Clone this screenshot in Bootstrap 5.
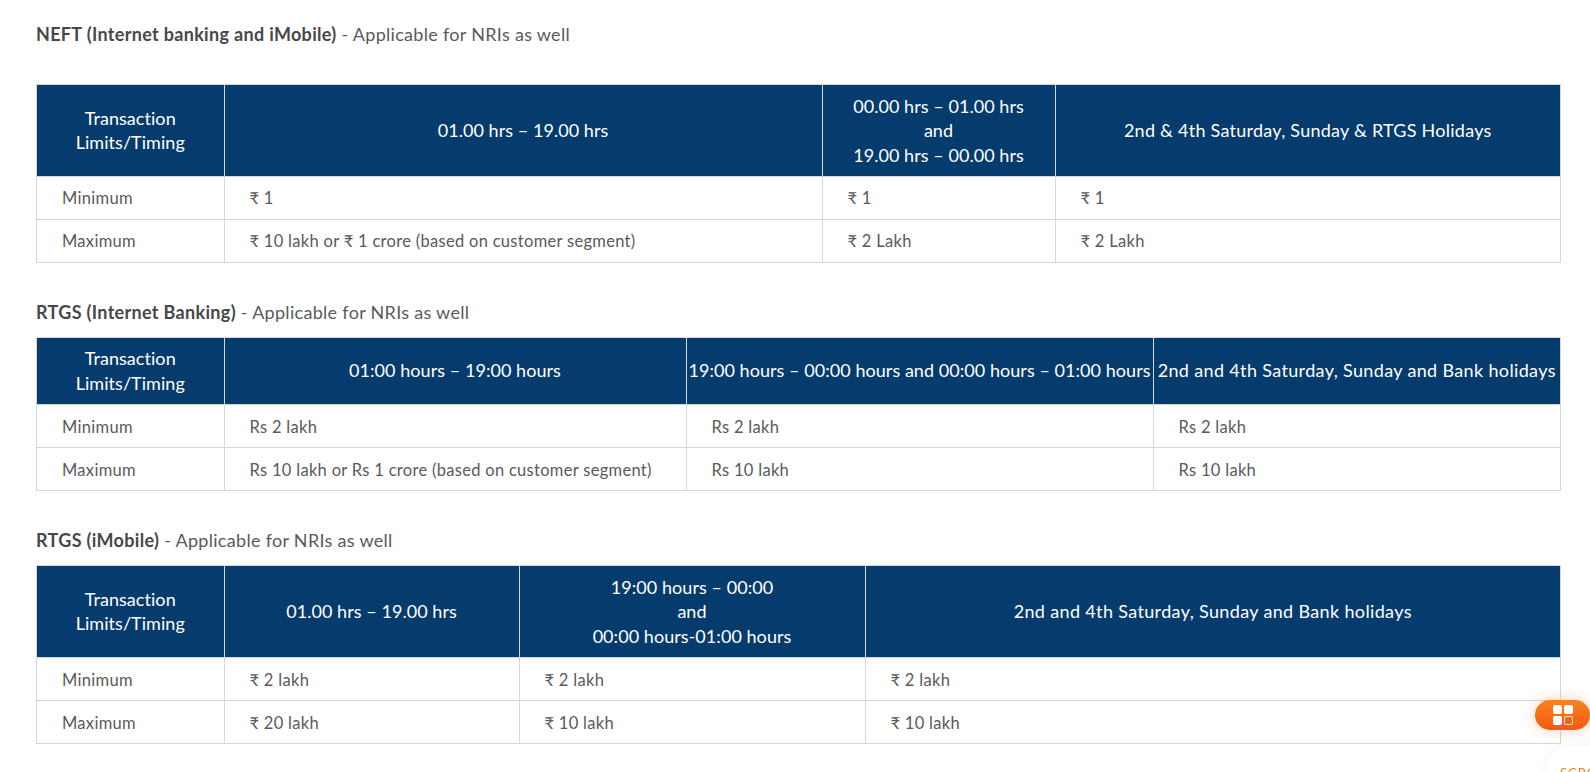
<!DOCTYPE html>
<html lang="en"><head><meta charset="utf-8"><title>Limits</title>
<link href="https://cdn.jsdelivr.net/npm/bootstrap@5.3.0/dist/css/bootstrap.min.css" rel="stylesheet">
<style>
html,body{height:772px;overflow:hidden;background:#fff}
body{font-family:Lato,"Noto Sans",sans-serif;font-size:16.5px;color:#555;}
.page-wrap{padding:23px 29px 0 36px}
.sec-title{font-size:18px;letter-spacing:.3px;line-height:22px;margin:0;color:#5a5a5a}
.sec-title b{font-weight:700;color:#484848;letter-spacing:.32px}
.t1-title{margin-bottom:39px}
.t2-title{margin-top:38px;margin-bottom:14px}
.t3-title{margin-top:38px;margin-bottom:14px}
.rate-table{table-layout:fixed;width:1525px;margin:0;border-color:#d6d6d6;--bs-table-color:#5a5a5a}
.rate-table th{background:#063b6d;color:#fff;font-weight:400;font-size:18px;letter-spacing:.05px;line-height:24.5px;text-align:center;vertical-align:middle;padding:8.5px 1px;border-color:#d6d6d6;--bs-table-bg:#063b6d;--bs-table-color:#fff;box-shadow:none}
.rate-table td{font-size:16.5px;letter-spacing:.3px;line-height:22px;padding:10px 10px 10px 25px;border-color:#d6d6d6;vertical-align:middle;height:43px}
.rate-table th:last-child{letter-spacing:.35px}
.t1 th:last-child{letter-spacing:.25px}
.t2 td,.t3 td{padding-top:11px;padding-bottom:9px}
.c-a{width:187.5px}
.t1 .c-b{width:598px}.t1 .c-c{width:233px}
.t2 .c-b{width:462px}.t2 .c-c{width:467px}
.t3 .c-b{width:295px}.t3 .c-c{width:346px}
.t3 thead th{padding-top:9px;padding-bottom:9px}
.fab-pill{position:fixed;left:1535px;top:700px;width:55px;height:30px;background:linear-gradient(180deg,#f9821e,#f4590f);box-shadow:0 0 14px rgba(245,110,30,.35);border-radius:15px}
.fab-pill svg{position:absolute;left:18px;top:5px}
.scroll-tab{position:fixed;left:1547px;top:746px;width:80px;height:60px;background:#fff;border-radius:22px 0 0 0;box-shadow:0 0 12px rgba(0,0,0,.06);padding:20px 0 0 13px;color:#f58220;font-size:13px;letter-spacing:1px;line-height:14px}
</style></head><body>
<main class="page-wrap">
<p class="sec-title t1-title"><b>NEFT (Internet banking and iMobile)</b> - Applicable for NRIs as well</p>
<table class="table table-bordered rate-table t1"><colgroup><col class="c-a"><col class="c-b"><col class="c-c"><col></colgroup>
<thead><tr><th>Transaction<br>Limits/Timing</th><th>01.00 hrs – 19.00 hrs</th><th>00.00 hrs – 01.00 hrs<br>and<br>19.00 hrs – 00.00 hrs</th><th>2nd &amp; 4th Saturday, Sunday &amp; RTGS Holidays</th></tr></thead>
<tbody><tr><td>Minimum</td><td>₹ 1</td><td>₹ 1</td><td>₹ 1</td></tr>
<tr><td>Maximum</td><td>₹ 10 lakh or ₹ 1 crore (based on customer segment)</td><td>₹ 2 Lakh</td><td>₹ 2 Lakh</td></tr></tbody></table>
<p class="sec-title t2-title"><b>RTGS (Internet Banking)</b> - Applicable for NRIs as well</p>
<table class="table table-bordered rate-table t2"><colgroup><col class="c-a"><col class="c-b"><col class="c-c"><col></colgroup>
<thead><tr><th>Transaction<br>Limits/Timing</th><th>01:00 hours – 19:00 hours</th><th>19:00 hours – 00:00 hours and 00:00 hours – 01:00 hours</th><th>2nd and 4th Saturday, Sunday and Bank holidays</th></tr></thead>
<tbody><tr><td>Minimum</td><td>Rs 2 lakh</td><td>Rs 2 lakh</td><td>Rs 2 lakh</td></tr>
<tr><td>Maximum</td><td>Rs 10 lakh or Rs 1 crore (based on customer segment)</td><td>Rs 10 lakh</td><td>Rs 10 lakh</td></tr></tbody></table>
<p class="sec-title t3-title"><b>RTGS (iMobile)</b> - Applicable for NRIs as well</p>
<table class="table table-bordered rate-table t3"><colgroup><col class="c-a"><col class="c-b"><col class="c-c"><col></colgroup>
<thead><tr><th>Transaction<br>Limits/Timing</th><th>01.00 hrs – 19.00 hrs</th><th>19:00 hours – 00:00<br>and<br>00:00 hours-01:00 hours</th><th>2nd and 4th Saturday, Sunday and Bank holidays</th></tr></thead>
<tbody><tr><td>Minimum</td><td>₹ 2 lakh</td><td>₹ 2 lakh</td><td>₹ 2 lakh</td></tr>
<tr><td>Maximum</td><td>₹ 20 lakh</td><td>₹ 10 lakh</td><td>₹ 10 lakh</td></tr></tbody></table>
</main>
<div class="fab-pill"><svg width="20" height="20" viewBox="0 0 20 20"><rect x="0" y="0" width="9" height="9" rx="2" fill="#fff"/><rect x="11" y="0" width="9" height="9" rx="2" fill="#fff"/><rect x="0" y="11" width="9" height="9" rx="2" fill="#fff"/><rect x="11.5" y="11.5" width="8" height="8" rx="1.5" fill="none" stroke="#fff" stroke-opacity=".75"/></svg></div>
<div class="scroll-tab">SCRO</div>
</body></html>
